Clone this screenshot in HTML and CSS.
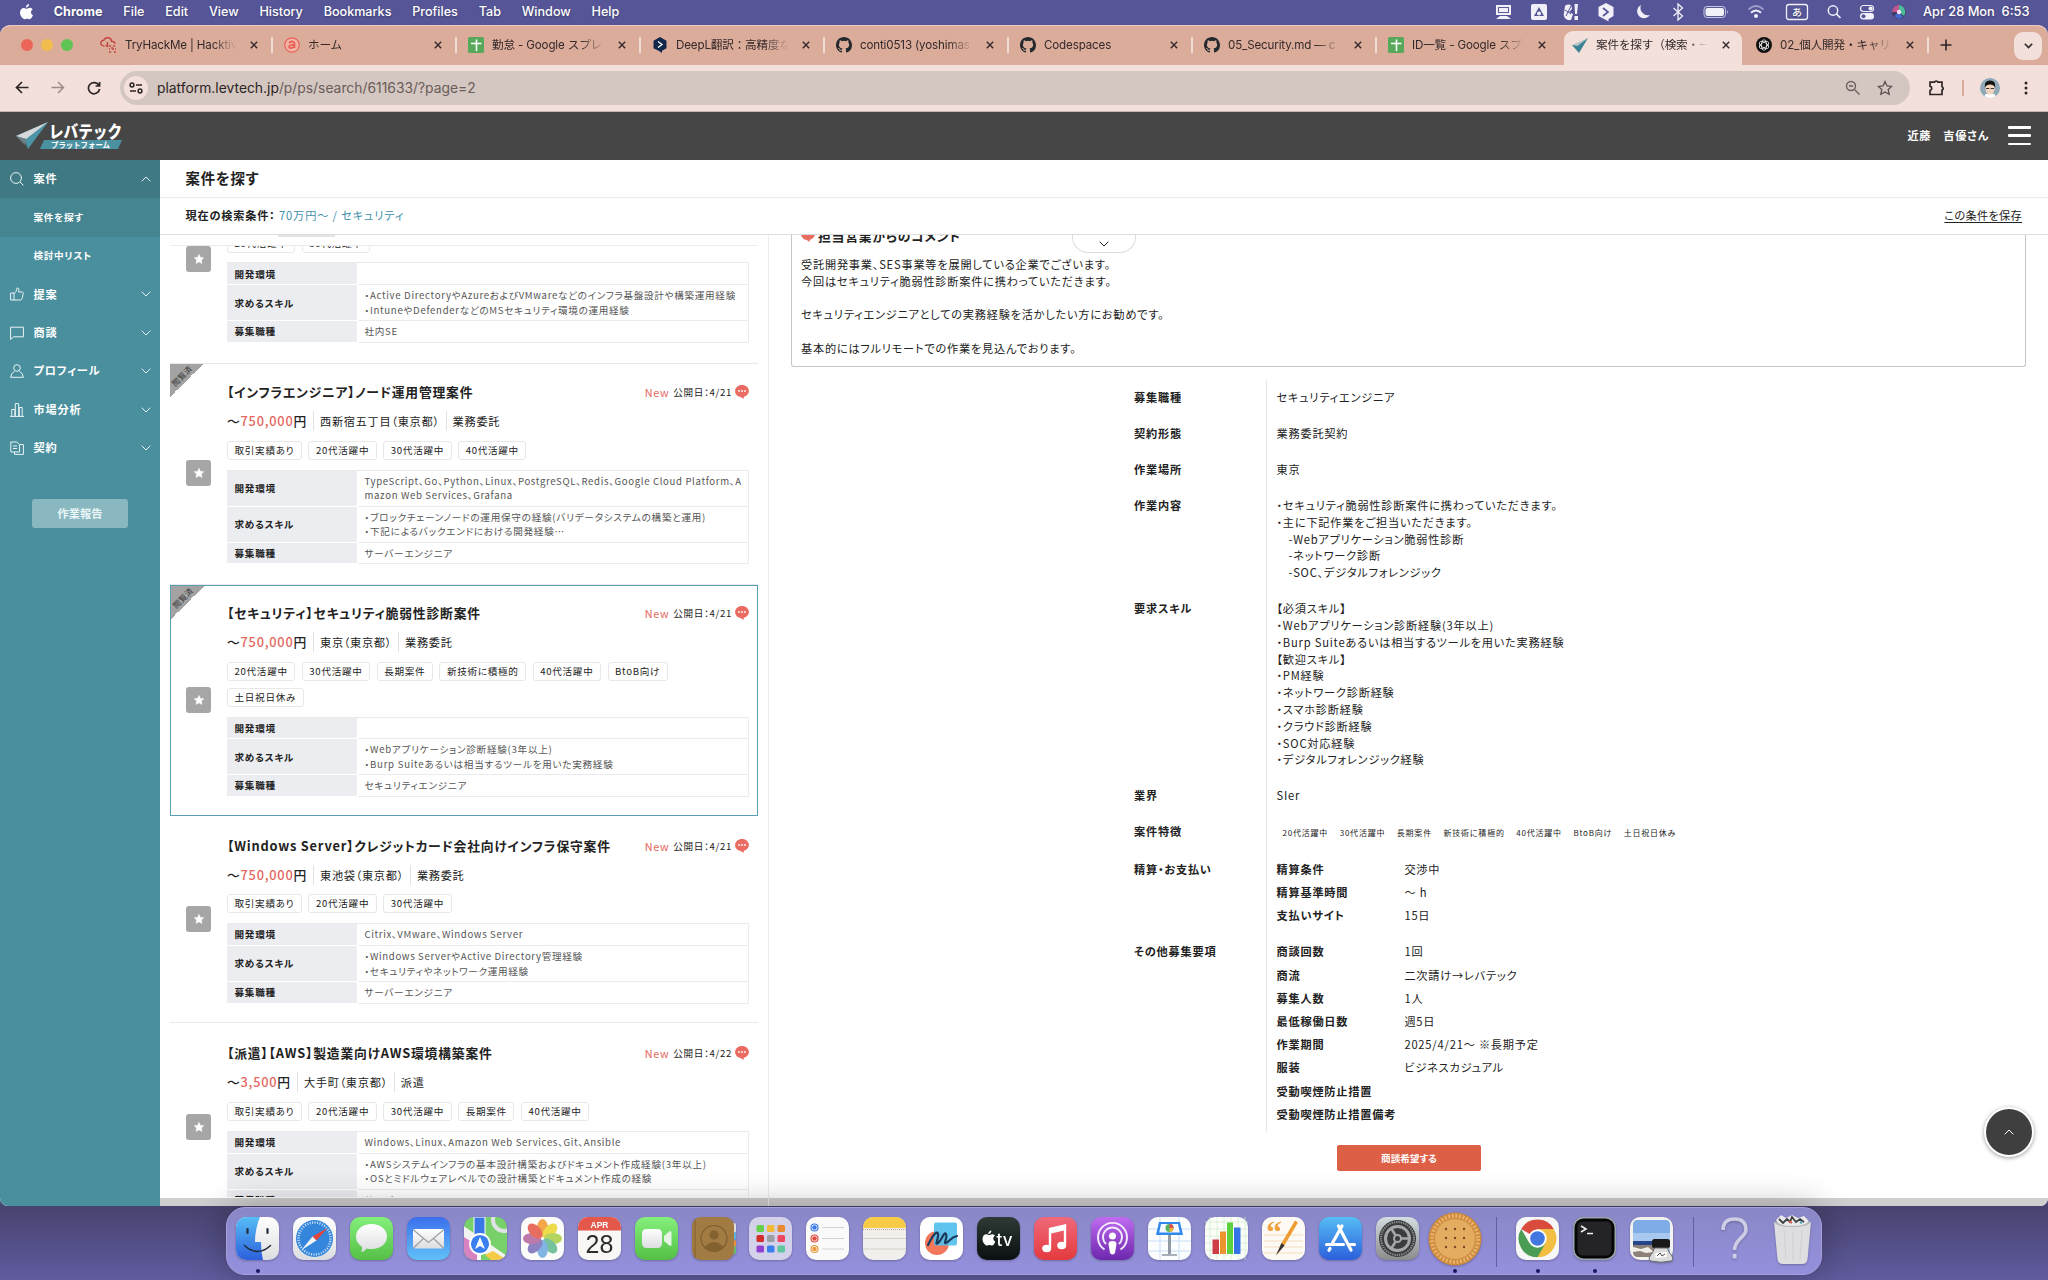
FILE: index.html
```html
<!DOCTYPE html>
<html lang="ja">
<head>
<meta charset="utf-8">
<title>案件を探す</title>
<link rel="stylesheet" href="styles.css">
</head>
<body>
<svg width="0" height="0" class="defs">
  <defs>
    <symbol id="star" viewBox="0 0 10 10"><path d="M5 .4 6.4 3.4 9.7 3.8 7.3 6.1 7.9 9.4 5 7.8 2.1 9.4 2.7 6.1 .3 3.8 3.6 3.4z" fill="#fff" stroke="#fff" stroke-width=".6" stroke-linejoin="round"/></symbol>
    <symbol id="bubble" viewBox="0 0 14 14"><path d="M7 0c4 0 6.900 2.700 6.900 6 0 2.600-1.900 5-5.100 5.800L8.600 14 5.700 12C2.300 11.500.1 9 .1 6 .1 2.700 3 0 7 0z" fill="#ea6b62"/><g fill="#fff"><circle cx="4" cy="6" r=".9"/><circle cx="7" cy="6" r=".9"/><circle cx="10" cy="6" r=".9"/></g></symbol>
    <symbol id="down" viewBox="0 0 10 6"><path d="M.7.7 5 5 9.300.7" fill="none" stroke="currentColor"/></symbol>
    <symbol id="github" viewBox="0 0 16 16"><path fill="#24292e" d="M8 0C3.580 0 0 3.580 0 8c0 3.540 2.290 6.530 5.470 7.590.4.070.55-.17.55-.38 0-.19-.01-.82-.01-1.490-2.010.37-2.530-.49-2.690-.94-.09-.23-.48-.94-.82-1.130-.28-.15-.68-.52-.01-.53.63-.01 1.080.58 1.230.82.72 1.210 1.870.87 2.330.66.070-.52.28-.87.51-1.070-1.780-.2-3.640-.89-3.640-3.950 0-.87.31-1.590.82-2.150-.08-.2-.36-1.020.08-2.120 0 0 .67-.21 2.200.82a7.600 7.600 0 0 1 4 0c1.530-1.040 2.200-.82 2.200-.82.44 1.100.16 1.920.08 2.120.51.56.82 1.270.82 2.150 0 3.070-1.870 3.750-3.650 3.950.29.25.54.73.54 1.480 0 1.070-.01 1.930-.01 2.200 0 .21.15.46.55.38A8.010 8.010 0 0 0 16 8c0-4.420-3.580-8-8-8z"/></symbol>
    <symbol id="sheet" viewBox="0 0 16 16"><rect width="16" height="16" rx="1.500" fill="#58a85c"/><path d="M8.500 2.500v11.500M3 6.500h10.500" stroke="#fff" stroke-width="1.600"/></symbol>
    <symbol id="close" viewBox="0 0 8 8"><path d="M.8.8 7.200 7.200M7.200.8.8 7.200" stroke="#33292a" stroke-width="1.400"/></symbol>
    <linearGradient id="gGreen" x2="0" y2="1"><stop stop-color="#84f07c"/><stop offset="1" stop-color="#55bf46"/></linearGradient>
    <linearGradient id="gBlue" x2="0" y2="1"><stop stop-color="#3a6fec"/><stop offset="1" stop-color="#62c1f8"/></linearGradient>
    <linearGradient id="gBlue2" x2="0" y2="1"><stop stop-color="#56bdf5"/><stop offset="1" stop-color="#2c5fdc"/></linearGradient>
    <linearGradient id="gWhite" x2="0" y2="1"><stop stop-color="#fff"/><stop offset="1" stop-color="#dcdde0"/></linearGradient>
    <linearGradient id="gRed" x2="0" y2="1"><stop stop-color="#f0697a"/><stop offset="1" stop-color="#e43a3e"/></linearGradient>
    <linearGradient id="gPurple" x2="0" y2="1"><stop stop-color="#c06bf0"/><stop offset="1" stop-color="#6c27ad"/></linearGradient>
    <linearGradient id="gDark" x2="0" y2="1"><stop stop-color="#2d3a35"/><stop offset="1" stop-color="#0b0f10"/></linearGradient>
    <linearGradient id="gGray" x2="0" y2="1"><stop stop-color="#d3dde0"/><stop offset="1" stop-color="#8b8b8b"/></linearGradient>
    <clipPath id="tile"><rect width="43" height="43" rx="10"/></clipPath>
  </defs>
</svg>

<header class="menubar">
  <svg class="apple" width="13" height="16" viewBox="0 0 13 16"><path fill="#fff" d="M9 0c.1 1-.3 1.900-.9 2.600-.6.700-1.400 1.100-2.200 1C5.800 2.700 6.200 1.800 6.800 1.200 7.400.5 8.300.1 9 0zM12.700 5.400c-1.100.7-1.700 1.600-1.700 2.800 0 1.400.8 2.400 2 2.900-.5 1.600-1.900 4.200-3.400 4.200-.9 0-1.400-.6-2.500-.6s-1.700.6-2.500.6C2.700 15.300 0 11.900 0 8.600c0-3 1.900-4.700 3.900-4.700 1.200 0 2 .8 2.900.8.800 0 1.800-.9 3.200-.9 1 0 2 .500 2.700 1.600z"/></svg>
  <b>Chrome</b><span>File</span><span>Edit</span><span>View</span><span>History</span><span>Bookmarks</span><span>Profiles</span><span>Tab</span><span>Window</span><span>Help</span>
  <svg class="status" width="424" height="24" viewBox="1490 0 424 24">
    <g fill="#f1f0f8">
      <path d="M1497 5h15v10h-15zm0 14h15l-4-3h-7z"/><path d="M1499 7h11v6h-11z" fill="#5c5a96"/><path d="M1500 8h9v4h-9z"/>
      <rect x="1532" y="4" width="16" height="16" rx="2"/><path d="M1540 7l5 9h-10z" fill="#565597"/><circle cx="1540" cy="13.500" r="2" fill="#f1f0f8"/>
      <path d="M1566 6c4-3 7-1 7 3l-3 3 4 2-2 6c-5 1-8-3-7-7zM1575.500 4h3.500l-1 10h-2zM1575.500 16h3.500v4h-3.500z"/><path d="M1567 16l5-10M1566 10l6 4" stroke="#565597"/>
      <path d="M1607 3l7.500 4v9l-5 3v2.500l-2.500-1.500-7.500-4V7z"/><path d="M1604 8l5 4-5 4" fill="none" stroke="#565597" stroke-width="1.700"/>
      <path d="M1642 5a7 7 0 1 0 9 10 7.500 7.500 0 0 1-9-10z"/>
      <path d="M1674.500 8l9 8-4.500 4V4l4.500 4-9 8" fill="none" stroke="#f1f0f8" stroke-width="1.300"/>
      <rect x="1705" y="6.500" width="21.500" height="11" rx="3" fill="none" stroke="#c9c7e0"/><rect x="1706.500" y="8" width="18.500" height="8" rx="2"/><path d="M1728 10v4q1.500-2 0-4z"/>
      <path d="M1749.500 9.500q7.500-7 15 0" fill="none" stroke="#9d9bc8" stroke-width="2"/><path d="M1752 12.700q5-4.500 10 0" fill="none" stroke="#f1f0f8" stroke-width="2"/><circle cx="1757" cy="16" r="2"/>
      <rect x="1787.500" y="4.500" width="21" height="15" rx="2.500" fill="none" stroke="#f1f0f8" stroke-width="1.300"/>
      <circle cx="1834" cy="10.500" r="4.700" fill="none" stroke="#f1f0f8" stroke-width="1.500"/><path d="M1837.500 14l4 4" stroke="#f1f0f8" stroke-width="1.700"/>
      <rect x="1861.500" y="5.500" width="13" height="6" rx="3" fill="none" stroke="#f1f0f8" stroke-width="1.200"/><circle cx="1871.500" cy="8.500" r="2"/><rect x="1861" y="13" width="14" height="6.500" rx="3.200"/><circle cx="1864.500" cy="16.200" r="2" fill="#565597"/>
    </g>
    <circle cx="1900" cy="12" r="7" fill="#3f3b66"/><path d="M1900 5a7 7 0 0 1 5 11l-5-4z" fill="#4dbb9b"/><path d="M1893 12a7 7 0 0 1 7-7v7z" fill="#c0568f"/><path d="M1895 16q5 5 9 1l-4-5z" fill="#4668cf"/><circle cx="1900" cy="12" r="2.200" fill="#f4dff4"/>
    <text x="1798" y="16" text-anchor="middle" class="kana">あ</text>
  </svg>
  <span class="clock">Apr 28 Mon&nbsp; 6:53</span>
</header>

<div class="window">
  <div class="tabstrip">
    <div class="lights"><i></i><i></i><i></i></div>
    <div class="tab first"><svg width="17" height="17" viewBox="0 0 17 17" fill="none" stroke="#c2453f" stroke-width="1.400"><path d="M4.500 9C2 9 .8 7.500.8 6c0-1.700 1.500-2.800 3-2.700C4.500 1.500 6 .8 7.500.8c2.200 0 3.800 1.500 4 3.500 2 0 3.500 1.300 3.500 2.800M7.500 5v5M6 8l1.500 2"/><path d="M9 9h3m1 0h3M9 12h1m2 0h4M9 15h3m2 0h2M12 10v3" stroke-dasharray="2 1"/></svg><span>TryHackMe | Hacktiv</span><svg class="x"><use href="#close"/></svg></div>
    <div class="tab"><svg width="16" height="16" viewBox="0 0 16 16" fill="none" stroke="#ea5f57" stroke-width="1.200"><circle cx="8" cy="8" r="7.200" fill="#f0b5a6"/><path d="M5 6q3-3 5.500 0v5M10.500 8Q5 7.500 5 10q1 2.500 5.500-.5" stroke-width="1.800"/></svg><span>ホーム</span><svg class="x"><use href="#close"/></svg></div>
    <div class="tab"><svg width="16" height="16"><use href="#sheet"/></svg><span>勤怠 - Google スプレ</span><svg class="x"><use href="#close"/></svg></div>
    <div class="tab"><svg width="16" height="16" viewBox="0 0 16 16"><path d="M8 0l6.500 3.700v7.600L10 13.800V16l-3-2L1.500 11.300V3.700z" fill="#12284b"/><path d="M6 4.500l4 3-4 3" fill="none" stroke="#fff" stroke-width="1.300"/></svg><span>DeepL翻訳：高精度な</span><svg class="x"><use href="#close"/></svg></div>
    <div class="tab"><svg width="16" height="16"><use href="#github"/></svg><span>conti0513 (yoshimas</span><svg class="x"><use href="#close"/></svg></div>
    <div class="tab"><svg width="16" height="16"><use href="#github"/></svg><span>Codespaces</span><svg class="x"><use href="#close"/></svg></div>
    <div class="tab"><svg width="16" height="16"><use href="#github"/></svg><span>05_Security.md — c</span><svg class="x"><use href="#close"/></svg></div>
    <div class="tab nosep"><svg width="16" height="16"><use href="#sheet"/></svg><span>ID一覧 - Google スプ</span><svg class="x"><use href="#close"/></svg></div>
    <div class="tab active"><svg width="16" height="16" viewBox="0 0 16 16"><path d="M0 8l5 0L16 1 7 16z" fill="#3a8294"/><path d="M0 8l5.500 1L16 1z" fill="#b7c3c6"/></svg><span>案件を探す（検索・一覧</span><svg class="x"><use href="#close"/></svg></div>
    <div class="tab"><svg width="16" height="16" viewBox="0 0 16 16"><circle cx="8" cy="8" r="8" fill="#111"/><g fill="none" stroke="#eee" stroke-width=".8"><ellipse cx="8" cy="8" rx="2.600" ry="5.200"/><ellipse cx="8" cy="8" rx="2.600" ry="5.200" transform="rotate(60 8 8)"/><ellipse cx="8" cy="8" rx="2.600" ry="5.200" transform="rotate(120 8 8)"/></g></svg><span>02_個人開発・キャリ</span><svg class="x"><use href="#close"/></svg></div>
    <svg class="plus" width="12" height="12" viewBox="0 0 12 12"><path d="M6 .5v11M.5 6h11" stroke="#2d2526" stroke-width="1.600"/></svg>
    <div class="tabmenu"><svg width="9" height="6" viewBox="0 0 9 6"><path d="M.8.8l3.700 3.700L8.200.8" fill="none" stroke="#2d2526" stroke-width="1.600"/></svg></div>
  </div>

  <div class="toolbar">
    <svg width="14" height="13" viewBox="0 0 14 13"><path d="M13.500 6.500H1.500M7 1 1.500 6.500 7 12" fill="none" stroke="#2d2526" stroke-width="1.700"/></svg>
    <svg width="14" height="13" viewBox="0 0 14 13"><path d="M.5 6.500h12M7 1l5.500 5.500L7 12" fill="none" stroke="#9c8d89" stroke-width="1.500"/></svg>
    <svg width="14" height="14" viewBox="0 0 14 14"><path d="M12 4.500A5.600 5.600 0 1 0 12.600 8M12.600 1v4h-4" fill="none" stroke="#2d2526" stroke-width="1.700"/></svg>
    <div class="url">
      <div class="site"><svg width="14" height="12" viewBox="0 0 14 12" fill="none" stroke="#2d2526" stroke-width="1.500"><circle cx="3" cy="3" r="1.900"/><path d="M7 3h6M1 9h6"/><circle cx="11" cy="9" r="1.900"/></svg></div>
      <p>platform.levtech.jp<em>/p/ps/search/611633/?page=2</em></p>
      <svg width="15" height="15" viewBox="0 0 15 15" fill="none" stroke="#6b5f5c" stroke-width="1.400"><circle cx="6" cy="6" r="4.500"/><path d="M9.500 9.500l5 5M4 6h4"/></svg>
      <svg class="bookmark" width="16" height="16" viewBox="0 0 16 16"><path d="M8 1.500l2 4.400 4.700.5-3.500 3.200 1 4.700L8 11.900l-4.200 2.400 1-4.700L1.300 6.400 6 5.900z" fill="none" stroke="#5d514f" stroke-width="1.300"/></svg>
    </div>
    <svg class="ext" width="17" height="17" viewBox="0 0 17 17"><path d="M2 3.200h4.500a1.800 1.800 0 0 1 3.400 0H14v4.500a1.800 1.800 0 0 1 0 3.400V15.500H2v-4a2.200 2.200 0 0 0 0-4.300z" fill="none" stroke="#2d2526" stroke-width="1.700"/></svg>
    <i class="bar"></i>
    <svg class="avatar" width="20" height="20" viewBox="0 0 20 20"><circle cx="10" cy="10" r="10" fill="#8fa9b8"/><path d="M4.500 18.300q0-3 5.500-3t5.500 3q-5 3.300-11 0z" fill="#fff"/><ellipse cx="10" cy="10.500" rx="4.600" ry="6" fill="#f2d4bd"/><path d="M4.800 9.500Q4 2.500 10 2.500T15.200 9.500Q13.500 6.500 10 6.500T4.800 9.500z" fill="#15130f"/><path d="M6 10.500h3.300m1.400 0H14" stroke="#333" stroke-width="1.100"/></svg>
    <svg width="4" height="16" viewBox="0 0 4 16" fill="#2d2526"><circle cx="2" cy="3" r="1.500"/><circle cx="2" cy="8" r="1.500"/><circle cx="2" cy="13" r="1.500"/></svg>
  </div>

  <div class="sitehead">
    <svg width="107" height="30" viewBox="0 0 107 30">
      <path d="M0 15 32 1 12 28 8.500 19z" fill="#4b95a6"/><path d="M0 15 32 1 10 18z" fill="#d5d9da"/><path d="M0 15l10 3-1 6z" fill="#6c7f84"/>
      <path d="M28 19h78l-4 9H24z" fill="#4a91a1"/>
      <text x="33" y="16.500" textLength="73" lengthAdjust="spacingAndGlyphs" class="logo-main">レバテック</text>
      <text x="35" y="26.500" textLength="59" lengthAdjust="spacingAndGlyphs" class="logo-sub">プラットフォーム</text>
    </svg>
    <span>近藤　吉優さん</span>
    <div class="burger"><i></i><i></i><i></i></div>
  </div>

  <div class="page">
    <nav class="side">
      <a class="open"><svg viewBox="0 0 14 14"><circle cx="6" cy="6" r="5.400"/><path d="M10 10l3.500 3.500"/></svg><span>案件</span><svg class="chev up"><use href="#down"/></svg></a>
      <a class="sub current"><span>案件を探す</span></a>
      <a class="sub"><span>検討中リスト</span></a>
      <a><svg viewBox="0 0 14 14"><path d="M.6 6h3.400v7H.6zM4 6.500C6 5.500 6.500 3.500 7 1c1.500-.5 2.500 1 1.500 4h4q1.200.5.700 2-.3.700-.5 1 .5 1-.3 2 .2 1-.5 1.500.1 1.300-1.200 1.500H4"/></svg><span>提案</span><svg class="chev"><use href="#down"/></svg></a>
      <a><svg viewBox="0 0 14 14"><path d="M.6 1.200h12.800v9.600H3.500L.6 13.500z"/></svg><span>商談</span><svg class="chev"><use href="#down"/></svg></a>
      <a><svg viewBox="0 0 14 14"><circle cx="7" cy="4" r="3.300"/><path d="M4.500 7.500Q1 9 .6 13.300h12.800Q13 9 9.500 7.500"/></svg><span>プロフィール</span><svg class="chev"><use href="#down"/></svg></a>
      <a><svg viewBox="0 0 14 14"><path d="M0 13.400h14M1.700 13V6.500h3.200V13M5.300 13V.6h3.400V13M9.300 13V4.500h2.900V13"/></svg><span>市場分析</span><svg class="chev"><use href="#down"/></svg></a>
      <a><svg viewBox="0 0 14 14"><path d="M.8 1h6l2.700 2.700V11H.8zM3 5h4M3 7.500h4M4.500 11v2.400h8.900V3.500H9.500"/></svg><span>契約</span><svg class="chev"><use href="#down"/></svg></a>
      <button>作業報告</button>
    </nav>

    <main>
      <h1>案件を探す</h1>
      <div class="cond"><b>現在の検索条件：</b><span>70万円～ / セキュリティ</span><u>この条件を保存</u></div>
      <div class="cols">
        <section class="list">
          <div class="pager"><i></i></div>
          <div class="scroll">
            <article class="card cut">
              <div class="fav"><svg width="10" height="10"><use href="#star"/></svg></div>
              <div class="body">
                <div class="tags"><span>20代活躍中</span><span>30代活躍中</span></div>
                <dl><dt>開発環境</dt><dd></dd><dt>求めるスキル</dt><dd class="two">・Active DirectoryやAzureおよびVMwareなどのインフラ基盤設計や構築運用経験<br>・IntuneやDefenderなどのMSセキュリティ環境の運用経験</dd><dt>募集職種</dt><dd>社内SE</dd></dl>
              </div>
            </article>
            <article class="card">
              <div class="seen"><span>閲覧済</span></div>
              <div class="fav"><svg width="10" height="10"><use href="#star"/></svg></div>
              <div class="body">
                <header><h2>【インフラエンジニア】ノード運用管理案件</h2><em>New</em><time>公開日：4/21</time><svg width="14" height="14"><use href="#bubble"/></svg></header>
                <p class="pay"><b>～<em>750,000</em>円</b><span>西新宿五丁目（東京都）</span><span>業務委託</span></p>
                <div class="tags"><span>取引実績あり</span><span>20代活躍中</span><span>30代活躍中</span><span>40代活躍中</span></div>
                <dl><dt>開発環境</dt><dd class="two latin">TypeScript、Go、Python、Linux、PostgreSQL、Redis、Google Cloud Platform、A<br>mazon Web Services、Grafana</dd><dt>求めるスキル</dt><dd class="two">・ブロックチェーンノードの運用保守の経験(バリデータシステムの構築と運用)<br>・下記によるバックエンドにおける開発経験…</dd><dt>募集職種</dt><dd>サーバーエンジニア</dd></dl>
              </div>
            </article>
            <article class="card selected">
              <div class="seen"><span>閲覧済</span></div>
              <div class="fav"><svg width="10" height="10"><use href="#star"/></svg></div>
              <div class="body">
                <header><h2>【セキュリティ】セキュリティ脆弱性診断案件</h2><em>New</em><time>公開日：4/21</time><svg width="14" height="14"><use href="#bubble"/></svg></header>
                <p class="pay"><b>～<em>750,000</em>円</b><span>東京（東京都）</span><span>業務委託</span></p>
                <div class="tags"><span>20代活躍中</span><span>30代活躍中</span><span>長期案件</span><span>新技術に積極的</span><span>40代活躍中</span><span>BtoB向け</span><span>土日祝日休み</span></div>
                <dl><dt>開発環境</dt><dd></dd><dt>求めるスキル</dt><dd class="two">・Webアプリケーション診断経験(3年以上)<br>・Burp Suiteあるいは相当するツールを用いた実務経験</dd><dt>募集職種</dt><dd>セキュリティエンジニア</dd></dl>
              </div>
            </article>
            <article class="card low">
              <div class="fav"><svg width="10" height="10"><use href="#star"/></svg></div>
              <div class="body">
                <header><h2>【Windows Server】クレジットカード会社向けインフラ保守案件</h2><em>New</em><time>公開日：4/21</time><svg width="14" height="14"><use href="#bubble"/></svg></header>
                <p class="pay"><b>～<em>750,000</em>円</b><span>東池袋（東京都）</span><span>業務委託</span></p>
                <div class="tags"><span>取引実績あり</span><span>20代活躍中</span><span>30代活躍中</span></div>
                <dl><dt>開発環境</dt><dd class="latin">Citrix、VMware、Windows Server</dd><dt>求めるスキル</dt><dd class="two latin">・Windows ServerやActive Directory管理経験<br>・セキュリティやネットワーク運用経験</dd><dt>募集職種</dt><dd>サーバーエンジニア</dd></dl>
              </div>
            </article>
            <article class="card low">
              <div class="fav"><svg width="10" height="10"><use href="#star"/></svg></div>
              <div class="body">
                <header><h2>【派遣】【AWS】製造業向けAWS環境構築案件</h2><em>New</em><time>公開日：4/22</time><svg width="14" height="14"><use href="#bubble"/></svg></header>
                <p class="pay"><b>～<em>3,500</em>円</b><span>大手町（東京都）</span><span>派遣</span></p>
                <div class="tags"><span>取引実績あり</span><span>20代活躍中</span><span>30代活躍中</span><span>長期案件</span><span>40代活躍中</span></div>
                <dl><dt>開発環境</dt><dd class="latin">Windows、Linux、Amazon Web Services、Git、Ansible</dd><dt>求めるスキル</dt><dd class="two">・AWSシステムインフラの基本設計構築およびドキュメント作成経験(3年以上)<br>・OSとミドルウェアレベルでの設計構築とドキュメント作成の経験</dd><dt>募集職種</dt><dd>サーバーエンジニア</dd></dl>
              </div>
            </article>
          </div>
        </section>

        <section class="detail">
          <div class="comment">
            <h3><svg width="14" height="14"><use href="#bubble"/></svg>担当営業からのコメント</h3>
            <p>受託開発事業、SES事業等を展開している企業でございます。<br>今回はセキュリティ脆弱性診断案件に携わっていただきます。<br><br>セキュリティエンジニアとしての実務経験を活かしたい方にお勧めです。<br><br>基本的にはフルリモートでの作業を見込んでおります。</p>
          </div>
          <div class="fold"><svg width="10" height="6"><use href="#down"/></svg></div>
          <dl class="spec">
            <dt>募集職種</dt><dd>セキュリティエンジニア</dd>
            <dt>契約形態</dt><dd>業務委託契約</dd>
            <dt>作業場所</dt><dd>東京</dd>
            <dt>作業内容</dt><dd>・セキュリティ脆弱性診断案件に携わっていただきます。<br>・主に下記作業をご担当いただきます。<br>　-Webアプリケーション脆弱性診断<br>　-ネットワーク診断<br>　-SOC、デジタルフォレンジック</dd>
            <dt>要求スキル</dt><dd>【必須スキル】<br>・Webアプリケーション診断経験(3年以上)<br>・Burp Suiteあるいは相当するツールを用いた実務経験<br>【歓迎スキル】<br>・PM経験<br>・ネットワーク診断経験<br>・スマホ診断経験<br>・クラウド診断経験<br>・SOC対応経験<br>・デジタルフォレンジック経験</dd>
            <dt>業界</dt><dd>SIer</dd>
            <dt>案件特徴</dt><dd class="traits"><span>20代活躍中</span><span>30代活躍中</span><span>長期案件</span><span>新技術に積極的</span><span>40代活躍中</span><span>BtoB向け</span><span>土日祝日休み</span></dd>
            <dt>精算・お支払い</dt><dd class="pairs"><b>精算条件</b><span>交渉中</span><b>精算基準時間</b><span>～ h</span><b>支払いサイト</b><span>15日</span></dd>
            <dt>その他募集要項</dt><dd class="pairs"><b>商談回数</b><span>1回</span><b>商流</b><span>二次請け→レバテック</span><b>募集人数</b><span>1人</span><b>最低稼働日数</b><span>週5日</span><b>作業期間</b><span>2025/4/21～ ※長期予定</span><b>服装</b><span>ビジネスカジュアル</span><b>受動喫煙防止措置</b><span></span><b class="wide">受動喫煙防止措置備考</b></dd>
          </dl>
          <button class="apply">商談希望する</button>
          <div class="totop"><svg width="10" height="6"><use href="#down"/></svg></div>
        </section>
      </div>
    </main>
  </div>
</div>

<footer class="dock">
  <div class="app run"><svg viewBox="0 0 43 43"><g clip-path="url(#tile)"><rect width="43" height="43" fill="url(#gWhite)"/><path d="M0 0h24q-5 12-5 25h6q0 10 2 18H0z" fill="url(#gBlue2)"/><path d="M11.500 12v4M31.500 12v4" stroke="#222c3c" stroke-width="2.200" stroke-linecap="round"/><path d="M8.500 28.500q13 12 26 0" fill="none" stroke="#222c3c" stroke-width="1.600" stroke-linecap="round"/></g></svg></div>
  <div class="app"><svg viewBox="0 0 43 43"><rect width="43" height="43" rx="10" fill="url(#gWhite)"/><circle cx="21.500" cy="21.500" r="18.500" fill="#3486dc"/><circle cx="21.500" cy="21.500" r="16" fill="none" stroke="#cfe4fa" stroke-width="2.500" stroke-dasharray="1 1.500"/><path d="M34.500 11 23.500 23.500 19.500 19.500z" fill="#e4433a"/><path d="M8.500 33 19.500 19.500 23.500 23.500z" fill="#f4f4f4"/></svg></div>
  <div class="app"><svg viewBox="0 0 43 43"><rect width="43" height="43" rx="10" fill="url(#gGreen)"/><path d="M21.500 7c9 0 15.500 5.500 15.500 12.500S30.500 32 21.500 32q-3 0-5-.6-2 3.200-5.500 3.900 1.500-2.300 1-5.500Q6 26 6 19.500C6 12.500 12.500 7 21.500 7z" fill="url(#gWhite)"/></svg></div>
  <div class="app"><svg viewBox="0 0 43 43"><rect width="43" height="43" rx="10" fill="url(#gBlue)"/><rect x="6" y="12" width="31" height="19.500" rx="2" fill="url(#gWhite)"/><path d="M6.500 13l15 12.500 15-12.500M6.500 31l10-9.500M36.500 31l-10-9.500" fill="none" stroke="#9ba0a6" stroke-width="1.200"/></svg></div>
  <div class="app"><svg viewBox="0 0 43 43"><g clip-path="url(#tile)"><rect width="43" height="43" fill="#78d06a"/><path d="M-5 12 43 45" stroke="#f2f2f2" stroke-width="10"/><path d="M0 20l16 10v13H0z" fill="#d982c1"/><path d="M27 43l-6-5 8-4 14 9z" fill="#f5ca46"/><circle cx="40" cy="3" r="11" fill="none" stroke="#dfe3e3" stroke-width="4"/><path d="M10 0v22h11V0z" fill="#3a78ea" stroke="#fff"/><path d="M15 26v17" stroke="#fff" stroke-width="4"/><circle cx="16" cy="27" r="10" fill="#3a7ff0" stroke="#fff" stroke-width="1.800"/><path d="M16 20l5 12-5-3-5 3z" fill="#fff"/></g></svg></div>
  <div class="app"><svg viewBox="0 0 43 43"><rect width="43" height="43" rx="10" fill="#fcfcfa"/><g opacity=".88"><ellipse cx="21.500" cy="11" rx="5.500" ry="9" fill="#f39b32"/><ellipse cx="21.500" cy="11" rx="5.500" ry="9" fill="#ecd735" transform="rotate(45 21.500 21.500)"/><ellipse cx="21.500" cy="11" rx="5.500" ry="9" fill="#abcf4b" transform="rotate(90 21.500 21.500)"/><ellipse cx="21.500" cy="11" rx="5.500" ry="9" fill="#64bb90" transform="rotate(135 21.500 21.500)"/><ellipse cx="21.500" cy="11" rx="5.500" ry="9" fill="#72abe0" transform="rotate(180 21.500 21.500)"/><ellipse cx="21.500" cy="11" rx="5.500" ry="9" fill="#7e73bd" transform="rotate(225 21.500 21.500)"/><ellipse cx="21.500" cy="11" rx="5.500" ry="9" fill="#b4689f" transform="rotate(270 21.500 21.500)"/><ellipse cx="21.500" cy="11" rx="5.500" ry="9" fill="#e55b4a" transform="rotate(315 21.500 21.500)"/></g></svg></div>
  <div class="app"><svg viewBox="0 0 43 43"><g clip-path="url(#tile)"><rect width="43" height="43" fill="#f8f7f5"/><rect width="43" height="13.500" fill="#e4584c"/></g><text x="21.500" y="10.500" text-anchor="middle" class="cal-m">APR</text><text x="21.500" y="36" text-anchor="middle" class="cal-d">28</text></svg></div>
  <div class="app"><svg viewBox="0 0 43 43"><rect width="43" height="43" rx="10" fill="url(#gGreen)"/><rect x="7" y="12" width="20" height="19" rx="4.500" fill="url(#gWhite)"/><path d="M29 19l6-5q1.500 0 1.500 1.500v12q0 1.500-1.500 1.500l-6-5z" fill="#e6f2e4"/></svg></div>
  <div class="app"><svg viewBox="0 0 43 43"><rect x="36" y="6" width="8" height="10" rx="2" fill="#ddd"/><rect x="36" y="15" width="8" height="8" rx="2" fill="#5db5dc"/><rect x="36" y="23" width="8" height="7" rx="2" fill="#ee9038"/><rect x="36" y="29" width="8" height="8" rx="2" fill="#68bd6c"/><rect width="42" height="43" rx="9" fill="#a27b43"/><path d="M3 2v39" stroke="#80602f"/><circle cx="22" cy="21.500" r="13" fill="none" stroke="#7d5d30" stroke-width="1.200"/><circle cx="22" cy="18" r="4.700" fill="#84622f"/><path d="M12.500 30q9.500-10 19 0-9.500 9-19 0z" fill="#84622f"/></svg></div>
  <div class="app"><svg viewBox="0 0 43 43"><rect width="43" height="43" rx="10" fill="#d4d2ea"/><rect x="7.500" y="8" width="7.500" height="7" rx="1.500" fill="#68d14c"/><rect x="18" y="8" width="7.500" height="7" rx="1.500" fill="#f1b936"/><rect x="28.500" y="8" width="7.500" height="7" rx="1.500" fill="#e88b30"/><rect x="7.500" y="18" width="7.500" height="7" rx="1.500" fill="#d22f29"/><rect x="18" y="18" width="7.500" height="7" rx="1.500" fill="#999ea3"/><rect x="28.500" y="18" width="7.500" height="7" rx="1.500" fill="#ee4860"/><rect x="7.500" y="28.500" width="7.500" height="7" rx="1.500" fill="#9340d1"/><rect x="18" y="28.500" width="7.500" height="7" rx="1.500" fill="#397fed"/><rect x="28.500" y="28.500" width="7.500" height="7" rx="1.500" fill="#5fc79d"/></svg></div>
  <div class="app"><svg viewBox="0 0 43 43"><rect width="43" height="43" rx="10" fill="#fbfafa"/><g stroke-width="1.200" fill="none"><circle cx="8.500" cy="10.500" r="3.500" stroke="#3b78e7"/><circle cx="8.500" cy="21.500" r="3.500" stroke="#e0493f"/><circle cx="8.500" cy="32" r="3.500" stroke="#e9993c"/></g><circle cx="8.500" cy="10.500" r="2.200" fill="#3b78e7"/><circle cx="8.500" cy="21.500" r="2.200" fill="#e0493f"/><circle cx="8.500" cy="32" r="2.200" fill="#e9993c"/><path d="M16 10.500h22M16 21.500h22M16 32h22" stroke="#d2d2d2"/></svg></div>
  <div class="app"><svg viewBox="0 0 43 43"><g clip-path="url(#tile)"><rect width="43" height="43" fill="#f0efeb"/><rect width="43" height="11" fill="#f7cb45"/><path d="M0 12.500h43" stroke="#b4aa8e" stroke-dasharray="1 1"/><path d="M0 21.500h43M0 32h43" stroke="#d2d1cc"/></g></svg></div>
  <div class="app"><svg viewBox="0 0 43 43"><rect width="43" height="43" rx="10" fill="#fff"/><circle cx="17" cy="26" r="12" fill="#f2765a"/><rect x="14" y="5.500" width="23" height="23" rx="2" fill="#55bfee" opacity=".93"/><path d="M8 28C13 18 17 13 18 17s-4 12 0 9 6-12 8-9-3 10 0 9 5-6 11-7" fill="none" stroke="#193a5b" stroke-width="2.200" stroke-linecap="round"/></svg></div>
  <div class="app"><svg viewBox="0 0 43 43"><rect width="43" height="43" rx="10" fill="url(#gDark)"/><path transform="translate(5.500 13.500) scale(.98)" fill="#fff" d="M9 0c.1 1-.3 1.900-.9 2.600-.6.700-1.400 1.100-2.200 1C5.800 2.700 6.200 1.800 6.800 1.200 7.400.5 8.300.1 9 0zM12.700 5.400c-1.100.7-1.700 1.600-1.700 2.800 0 1.400.8 2.400 2 2.900-.5 1.600-1.900 4.200-3.400 4.200-.9 0-1.400-.6-2.500-.6s-1.700.6-2.500.6C2.700 15.300 0 11.900 0 8.600c0-3 1.900-4.700 3.900-4.700 1.200 0 2 .8 2.900.8.800 0 1.800-.9 3.200-.9 1 0 2 .5 2.700 1.600z"/><text x="19.500" y="28.500" class="tv">tv</text></svg></div>
  <div class="app"><svg viewBox="0 0 43 43"><rect width="43" height="43" rx="10" fill="url(#gRed)"/><path d="M16 30.500V12l15-3.500V27" fill="none" stroke="#fff" stroke-width="2.400"/><path d="M15 11.500l17-4V13l-17 4z" fill="#fff"/><ellipse cx="12.700" cy="31.500" rx="4.500" ry="3.700" fill="#fff"/><ellipse cx="27.700" cy="28.500" rx="4.500" ry="3.700" fill="#fff"/></svg></div>
  <div class="app"><svg viewBox="0 0 43 43"><rect width="43" height="43" rx="10" fill="url(#gPurple)"/><g fill="none" stroke="#f4eaff" stroke-width="1.900"><path d="M13.500 32.500A14.500 14.500 0 1 1 29.500 32.500"/><path d="M15 27A9.500 9.500 0 1 1 28 27"/></g><circle cx="21.500" cy="19" r="3.500" fill="#fff"/><path d="M17.500 27q0-3 4-3t4 3l-1.500 9q-2.500 3-5 0z" fill="#fff"/></svg></div>
  <div class="app"><svg viewBox="0 0 43 43"><rect width="43" height="43" rx="10" fill="#fbfdff"/><path d="M0 12h43M0 24h43M0 34h43M12 0v43M31 0v43" stroke="#c7def5"/><path d="M20 16h3v22h-3z" fill="#929ba5"/><path d="M14 37h15v2H14z" fill="#a8b0b8"/><path d="M11 5h21l3 13H8z" fill="#2f88ea"/><path d="M13 7h17l1.800 8.500H11.200z" fill="#f4f8ff"/><circle cx="21.500" cy="11" r="4" fill="#54b35e"/><path d="M21.500 11V7a4 4 0 0 1 4 4z" fill="#e24c49"/><path d="M21.500 11h4a4 4 0 0 1-4 4z" fill="#f1b53d"/></svg></div>
  <div class="app"><svg viewBox="0 0 43 43"><rect width="43" height="43" rx="10" fill="#fbfdf9"/><path d="M5 0v43M12 0v43M19 0v43M26 0v43M33 0v43M40 0v43M0 5h43M0 12h43M0 19h43M0 26h43M0 33h43" stroke="#d4ecd0" stroke-width=".8"/><path d="M7.500 22.500H14V37H7.500z" fill="#cf3d44"/><path d="M15 14.500h6V37h-6z" fill="#ec952e"/><path d="M22 5.500h6V37h-6z" fill="#5fd03e"/><path d="M29 10.500h6.500V37H29z" fill="#3474e6"/></svg></div>
  <div class="app"><svg viewBox="0 0 43 43"><rect width="43" height="43" rx="10" fill="#fdfaf5"/><path d="M2 18h39M2 24h39M2 30h39M2 36h39" stroke="#f3dcbe"/><text x="4" y="26" class="quote">“</text><path d="M33 3.500 19 27l-5 11 8-9L36 5.500z" fill="#ef9c33"/><path d="M19.500 26 14 38.500l8.500-10z" fill="#35363a"/></svg></div>
  <div class="app"><svg viewBox="0 0 43 43"><rect width="43" height="43" rx="10" fill="url(#gBlue2)"/><path d="M23 9 13.500 26M11 31.500l-1 1.800M19.500 9 32 33M7.500 27.500h17M29 27.500h6.500" stroke="#fff" stroke-width="3.200" stroke-linecap="round"/></svg></div>
  <div class="app"><svg viewBox="0 0 43 43"><rect width="43" height="43" rx="10" fill="url(#gGray)"/><circle cx="21.500" cy="21.500" r="18.500" fill="#3b3c3e"/><circle cx="21.500" cy="21.500" r="16.500" fill="none" stroke="#8d9092" stroke-width="2" stroke-dasharray="1.300 1"/><circle cx="21.500" cy="21.500" r="12" fill="none" stroke="#a5a8aa" stroke-width="3"/><path d="M21.500 21.500H34M21.500 21.500 15 11M21.500 21.500 15 32" stroke="#a5a8aa" stroke-width="2.500"/><circle cx="21.500" cy="21.500" r="3.500" fill="#3b3c3e" stroke="#a5a8aa" stroke-width="2"/></svg></div>
  <div class="app run"><svg class="big" viewBox="0 0 54 54"><circle cx="27" cy="27" r="26.500" fill="#cb8a3d"/><circle cx="27" cy="27" r="23" fill="none" stroke="#eab168" stroke-width="4" stroke-dasharray="2 1.600"/><circle cx="27" cy="27" r="20" fill="#e4ac60"/><g fill="#7a4a26"><circle cx="18" cy="17" r="1.200"/><circle cx="27" cy="17" r="1.200"/><circle cx="36" cy="17" r="1.200"/><circle cx="18" cy="26" r="1.200"/><circle cx="27" cy="26" r="1.200"/><circle cx="36" cy="26" r="1.200"/><circle cx="18" cy="35" r="1.200"/><circle cx="27" cy="35" r="1.200"/><circle cx="36" cy="35" r="1.200"/></g></svg></div>
  <i class="sep"></i>
  <div class="app run"><svg viewBox="0 0 43 43"><rect width="43" height="43" rx="10" fill="#f7f7f7"/><path d="M21.500 21.500 5.200 12A18.800 18.800 0 0 1 37.800 12z" fill="#d94b3d"/><path d="M21.500 21.500V12h16.300A18.800 18.800 0 0 1 21.500 40.300z" fill="#f2bf42"/><path d="M21.500 40.300A18.800 18.800 0 0 1 5.200 12l8.200 14 16.200 0z" fill="#4a9c54"/><circle cx="21.500" cy="21.500" r="9.200" fill="#fff"/><circle cx="21.500" cy="21.500" r="7.300" fill="#4277e0"/></svg></div>
  <div class="app run"><svg viewBox="0 0 43 43"><rect width="43" height="43" rx="10" fill="#9aa5a8"/><rect x="1.500" y="1.500" width="40" height="40" rx="9" fill="#060606"/><rect x="4.500" y="4.500" width="34" height="34" rx="5" fill="#242426"/><path d="M8 9l5 3-5 3M14 16.500h6" fill="none" stroke="#eee" stroke-width="1.600"/></svg></div>
  <div class="app"><svg viewBox="0 0 43 43"><rect width="43" height="43" rx="10" fill="#f4f2ee"/><rect x="3" y="3" width="37" height="37" rx="5" fill="#a9c8ef"/><path d="M3 8q0-5 5-5h27q5 0 5 5v8H3z" fill="#7fabe6"/><path d="M3 24h37v5H3z" fill="#27468a"/><path d="M3 28h24v12H8q-5 0-5-5z" fill="#8d8078"/><path d="M3 30l8 2 7-2 6 5-8 1-6-2-7 1z" fill="#f0eee9"/><rect x="22" y="22" width="18" height="9" rx="2.500" fill="#191919"/><path d="M24.500 31h13q1 4 4.500 8 2 4-1 5-10 2.500-20 0-3-1-1-5 3.500-4 4.500-8z" fill="#dcdcdc" stroke="#66676a"/><path d="M25.500 36l11-1v5l-11 1z" fill="#fff"/><path d="M27 39l3-3 2 3 3-2" stroke="#444" fill="none"/></svg></div>
  <i class="sep"></i>
  <div class="app"><svg viewBox="0 0 43 43"><path d="M10 13q0-11 11.500-11T33 13c0 7-11.500 9-11.500 20" fill="none" stroke="#cfcce6" stroke-width="3.600"/><path d="M19.700 37h3.800v4.500h-3.800z" fill="#cfcce6"/></svg></div>
  <div class="app"><svg class="big" viewBox="0 0 54 54"><path d="M9 10h37l-3.500 37q-.5 5-5.500 5H18q-5 0-5.500-5z" fill="#dedee1"/><path d="M9 10h37q-3 5-18.500 5T9 10z" fill="#b5b6ba"/><path d="M11 8l5-5 5 3 6-3 6 3 6-2 5 5q-3 5-17 5t-16-6z" fill="#e9e9ea"/><path d="M14 7l4 4 4-4 3 3 2-5 4 5 4-3 4 3" stroke="#3d4145" stroke-width="1.800" fill="none"/><path d="M19 18l2 30M28 20v29M37 18l-2 30" stroke="#cfd0d3" fill="none"/><path d="M24 9l3 2" stroke="#d65b4b" stroke-width="2"/><path d="M35 10l2 1" stroke="#4c9fb8" stroke-width="2"/></svg></div>
</footer>
</body>
</html>
```
FILE: styles.css
```css
* { box-sizing: border-box; }
html, body { height: 100%; }
body {
  margin: 0;
  overflow: hidden;
  position: relative;
  display: flex;
  flex-direction: column;
  background: linear-gradient(#565597 0, #565597 1190px, #47436f 1206px, #605b9e 1280px);
  font-family: "Noto Sans CJK JP", sans-serif;
  font-feature-settings: "palt";
  color: #222;
}
h1, h2, h3, p, dl, dd, dt { margin: 0; }
em, i { font-style: normal; }
svg { display: block; flex: none; }
.defs { position: absolute; }

/* system menu bar */
.menubar {
  flex: none;
  height: 25px;
  display: flex;
  align-items: center;
  gap: 20.8px;
  padding: 0 19px 2px 20px;
  color: #fff;
  font: 500 12.600px/22px Inter, sans-serif;
  text-shadow: 0 1px 2px rgba(0, 0, 0, .3);
}
.menubar b { font-weight: 700; }
.menubar span { font-weight: 500; }
.menubar .status { margin-left: auto; margin-right: -11px; }
.menubar .clock { width: 106px; white-space: nowrap; font-size: 12.800px; }
.kana { font: 500 10px "Noto Sans CJK JP", sans-serif; fill: #fff; }

/* browser window */
.window {
  flex: none;
  height: 1181px;
  display: flex;
  flex-direction: column;
  border-radius: 10px 10px 8px 8px;
  overflow: hidden;
  border-top: 1px solid #e8c8bd;
  background: #fff;
}
.tabstrip {
  flex: none;
  height: 39px;
  display: flex;
  align-items: center;
  background: #dcac9b;
}
.tabstrip > * { margin-top: -1px; }
.lights { display: flex; gap: 8px; padding-left: 21px; width: 89px; }
.lights i { width: 12px; height: 12px; border-radius: 50%; background: #ec6559; }
.lights i:nth-child(2) { background: #f2bd4c; }
.lights i:nth-child(3) { background: #5fc454; }
.tab {
  position: relative;
  width: 184px;
  height: 34px;
  display: flex;
  align-items: center;
  padding: 0 15px 0 11px;
  font: 400 11.600px/18px Inter, "Noto Sans CJK JP", sans-serif;
  letter-spacing: -.15px;
  color: #33292a;
}
.tab::after { content: ""; position: absolute; right: 0; top: 9px; width: 2px; height: 16px; background: #f1dcd5; }
.tab.nosep::after, .tab.active::after { display: none; }
.tab span {
  flex: 1;
  min-width: 0;
  margin: 0 10px 0 8px;
  height: 18px;
  overflow: hidden;
  white-space: nowrap;
  -webkit-mask-image: linear-gradient(90deg, #000 76%, transparent 97%);
  mask-image: linear-gradient(90deg, #000 76%, transparent 97%);
}
.tab .x { width: 8px; height: 8px; }
.tab.active { align-self: flex-end; height: 34px; padding-bottom: 8px; margin-top: 5px; z-index: 0; }
.tab.active::before {
  content: "";
  position: absolute;
  z-index: -1;
  left: 3px; right: 3px; top: 0; bottom: 0;
  border-radius: 9px 9px 0 0;
  background: #f3e0da;
}
.tab.active svg, .tab.active span { position: relative; top: 1px; }
.plus { margin-left: 11px; }
.tabmenu {
  margin: 0 6px 0 auto;
  width: 28px; height: 28px;
  display: grid;
  place-items: center;
  border-radius: 9px;
  background: #f3e0da;
}

.toolbar {
  flex: none;
  height: 47px;
  display: flex;
  align-items: center;
  gap: 22px;
  padding: 0 20px 1px 15px;
  background: #f3e0da;
  border-bottom: 1px solid #c9b5ae;
}
.url {
  flex: 1;
  height: 34px;
  margin-left: -3px;
  display: flex;
  align-items: center;
  padding: 0 17px 0 4px;
  border-radius: 17px;
  background: #d4c6c0;
}
.site { width: 24px; height: 24px; border-radius: 50%; background: #f3e0da; display: grid; place-items: center; }
.url p { flex: 1; padding-left: 9px; font: 400 13.850px/20px Inter, sans-serif; color: #2b2425; }
.url em { color: #6a5d5b; }
.bookmark { margin-left: 17px; }
.ext { margin-left: -4px; }
.bar { width: 2px; height: 16px; background: #dcac9b; margin-left: -5px; }
.avatar { margin-left: -6px; margin-right: 2px; }

/* site header */
.sitehead {
  flex: none;
  height: 48px;
  display: flex;
  align-items: center;
  padding: 0 17px 0 16px;
  background: #464646;
  color: #fff;
  font-size: 11.200px;
  font-weight: 700;
  letter-spacing: .76px;
}
.sitehead span { margin: -2px 19px 0 auto; }
.logo-main { font: 900 17px "Noto Sans CJK JP", sans-serif; fill: #fff; letter-spacing: 0; }
.logo-sub { font: 700 8px "Noto Sans CJK JP", sans-serif; fill: #fff; letter-spacing: 0; }
.burger { width: 23px; height: 19px; display: flex; flex-direction: column; justify-content: space-between; margin-top: -1px; }
.burger i { height: 2.500px; border-radius: 1px; background: #fff; }

.page { flex: 1; min-height: 0; display: flex; letter-spacing: .78px; }

/* side navigation */
.side { width: 160px; flex: none; background: #4a8f9e; color: #fff; font-size: 11.200px; font-weight: 700; }
.side a { height: 38.400px; display: flex; align-items: center; padding: 0 9.500px 0 10px; }
.side a > svg:first-child { width: 14px; height: 14px; fill: none; stroke: #e9f4f6; stroke-width: 1; }
.side a span { flex: 1; margin: -1.500px 0 0 9.500px; }
.side .chev { width: 10px; height: 6px; color: #e3f0f3; }
.side .chev.up { transform: rotate(180deg); }
.side .open { background: #3f7a84; }
.side .sub { padding-left: 24px; font-size: 9.600px; letter-spacing: .7px; }
.side .current { background: #458591; }
.side button {
  display: block;
  width: 96px; height: 29px;
  margin: 31.500px 0 0 32px;
  padding: 0;
  border: 0;
  border-radius: 3px;
  background: #8ab8c0;
  color: #e9f5f7;
  font: 700 11.200px/28px "Noto Sans CJK JP", sans-serif;
}

main { flex: 1; min-width: 0; display: flex; flex-direction: column; }
h1 { flex: none; height: 38px; padding-left: 25.500px; border-bottom: 1px solid #ebebeb; font-size: 14.400px; line-height: 35px; }
.cond { flex: none; height: 37px; display: flex; align-items: center; padding: 0 26px 2px 25.500px; border-bottom: 1px solid #dcdcdc; font-size: 11.200px; }
.cond span { color: #3f8fa9; margin-left: 3.500px; letter-spacing: .85px; }
.cond u { margin-left: auto; letter-spacing: .3px; text-underline-offset: 2px; }

.cols { flex: 1; min-height: 0; display: flex; }

/* result list */
.list { width: 609px; flex: none; padding: 0 10px; border-right: 1px solid #ececec; display: flex; flex-direction: column; background: linear-gradient(transparent 963px, #cfcfcf 963px); }
.pager { height: 10px; flex: none; }
.pager i { display: block; width: 57px; height: 1.500px; margin-left: 108px; background: #e4e4e4; }
.scroll { height: 952px; flex: none; overflow: hidden; border-top: 1px solid #ececec; background: #fff; }
.card {
  position: relative;
  display: flex;
  align-items: center;
  width: 588px;
  padding: 17.500px 9px 19.500px 16px;
  border-bottom: 1px solid #e8e8e8;
}
.card.cut { height: 209px; margin-top: -91.500px; padding-top: 78px; padding-bottom: 20px; }
.card.cut .fav { margin-top: -58px; }
.card.cut .body { margin-top: -8px; }
.card.cut .tags { margin: 10.500px 0 9px; }
.card.selected { border: 1px solid #589fb3; height: 231px; padding: 16.500px 8px 18px 15px; }
.card.low { padding-top: 19px; padding-bottom: 18.500px; }
.fav { width: 25px; height: 26px; flex: none; display: grid; place-items: center; border-radius: 3px; background: #a6a6a6; }
.body { flex: 1; min-width: 0; margin-left: 16px; }
.card header { height: 22px; display: flex; align-items: center; font-size: 9.600px; letter-spacing: .68px; }
.card h2 { margin: 0 auto 0 0; font-size: 12.800px; line-height: 22px; letter-spacing: .8px; white-space: nowrap; }
.card header em { font-size: 10.800px; color: #e4665d; }
.card header time { margin: 0 3px 0 4px; }
.card em { color: #e4665d; }
.pay { display: flex; align-items: center; height: 20px; margin-top: 8px; font-size: 11.200px; line-height: 20px; letter-spacing: .7px; }
.pay b { font-weight: 500; font-size: 12.800px; letter-spacing: .76px; }
.pay span { margin-left: 6px; padding-left: 6px; border-left: 1px solid #e2e2e2; }
.tags { display: flex; flex-wrap: wrap; gap: 7px 6.600px; margin: 9.500px 0 10px; letter-spacing: .7px; }
.selected .tags { padding-right: 40px; }
.tags span { height: 19px; padding: 0 6.500px; border: 1px solid #e8e8e8; border-radius: 3px; font-size: 9.600px; line-height: 17px; white-space: nowrap; }
.card dl { display: grid; grid-template-columns: 130px 1fr; column-gap: 1px; width: 522px; font-size: 9.600px; line-height: 14.400px; letter-spacing: .74px; border-top: 1px solid #ebebee; }
.card dt { display: flex; align-items: center; padding-left: 7.500px; background: #ecedf1; font-weight: 700; border-bottom: 1px solid #fff; }
.card dd { display: block; min-height: 21.800px; padding: 3px 0 0 6.500px; color: #555; border: solid #ebebee; border-width: 0 1px 1px 0; white-space: nowrap; }
.card dd.two { height: 36px; }
.card dd.latin { letter-spacing: .65px; }
.card.cut dd { letter-spacing: .69px; }
.seen { position: absolute; left: 0; top: 0; width: 33px; height: 33px; overflow: hidden; background: linear-gradient(135deg, #a3a3a3 50%, transparent 50%); }
.seen span { position: absolute; left: -3px; top: 6px; width: 30px; text-align: center; font-size: 8px; line-height: 12px; letter-spacing: .3px; color: #3a3a3a; transform: rotate(-45deg); }

/* detail pane */
.detail { position: relative; flex: 1; min-width: 0; overflow: hidden; display: flex; flex-direction: column; padding: 0 22px; font-size: 11.200px; line-height: 16.800px; background: linear-gradient(transparent 963px, #cfcfcf 963px); }
.comment { flex: none; height: 132px; border: 1px solid #c6c6c6; border-top: 0; border-radius: 0 0 3px 3px; padding: 0 9px; }
.comment h3 { display: flex; gap: 3px; margin-top: -9px; height: 20px; font-size: 12.800px; line-height: 19px; }
.comment h3 svg { margin-top: 2px; }
.comment p { margin-top: 10px; }
.fold { position: absolute; left: 303px; top: -1px; width: 64px; height: 19px; display: grid; place-items: center; padding-top: 5px; border: 1px solid #dcdcdc; border-top: 0; border-radius: 0 0 16px 16px; background: #fff; }
.fold svg { margin-top: -4px; }
.spec { flex: none; display: grid; grid-template-columns: 132px 1fr; width: 900px; margin: 12.500px 0 0 343px; }
.spec dt { font-weight: 700; padding: 9.600px 0; }
.spec dd { border-left: 1px solid #e6e6e6; padding: 9.600px 0 9.600px 9.500px; min-height: 36px; white-space: nowrap; }
.traits { display: flex; gap: 11.600px; font-size: 8px; }
.spec .traits { padding-left: 15.500px; min-height: 37.700px; padding-top: 10.800px; }
.pairs { display: grid; grid-template-columns: 127.900px 1fr; row-gap: 6.400px; }
.pairs b { min-height: 16.800px; }
.pairs .wide { white-space: nowrap; width: 127px; }
.apply { width: 144px; height: 26px; flex: none; margin: 13.300px 0 0 546px; padding: 0; border: 0; border-radius: 2px; background: #dd5f46; color: #fff; font: 700 9.600px/26px "Noto Sans CJK JP", sans-serif; font-feature-settings: "palt"; }
.totop { position: absolute; right: 14px; top: 872px; width: 50px; height: 50px; border: 2px solid #fff; border-radius: 50%; background: #3f3f3f; color: #fff; display: grid; place-items: center; box-shadow: 0 1px 4px rgba(0, 0, 0, .4); }
.totop svg { transform: rotate(180deg); }

/* dock */
.dock {
  position: absolute;
  left: 226px;
  top: 1207px;
  width: 1596px;
  height: 68px;
  display: flex;
  align-items: flex-start;
  padding: 10px 2px 0;
  border: 1px solid #a5a1df;
  border-radius: 19px;
  background: linear-gradient(#8a87c7, #9490dd);
  box-shadow: 0 0 34px rgba(0, 0, 0, .3);
}
.app { position: relative; width: 57px; flex: none; height: 57px; display: flex; justify-content: center; align-items: flex-start; }
.app svg { width: 43px; height: 43px; overflow: visible; filter: drop-shadow(0 1px 1px rgba(0, 0, 0, .25)); margin-top: -1px; }
.app svg.big { width: 54px; height: 54px; margin-top: -6px; }
.app.run::after { content: ""; position: absolute; left: 26.500px; top: 51px; width: 4px; height: 4px; border-radius: 50%; background: #1c1560; }
.sep { width: 1px; height: 50px; margin: -1px 12.500px 0; background: #625fa8; flex: none; }
.cal-m { font: 700 8.500px "Liberation Sans", sans-serif; fill: #fff; }
.cal-d { font: 400 25px "Liberation Sans", sans-serif; fill: #2c2c2c; }
.tv { font: 500 17px Inter, sans-serif; fill: #fff; }
.quote { font: 700 32px "Liberation Serif", serif; fill: #eea33f; }
```
